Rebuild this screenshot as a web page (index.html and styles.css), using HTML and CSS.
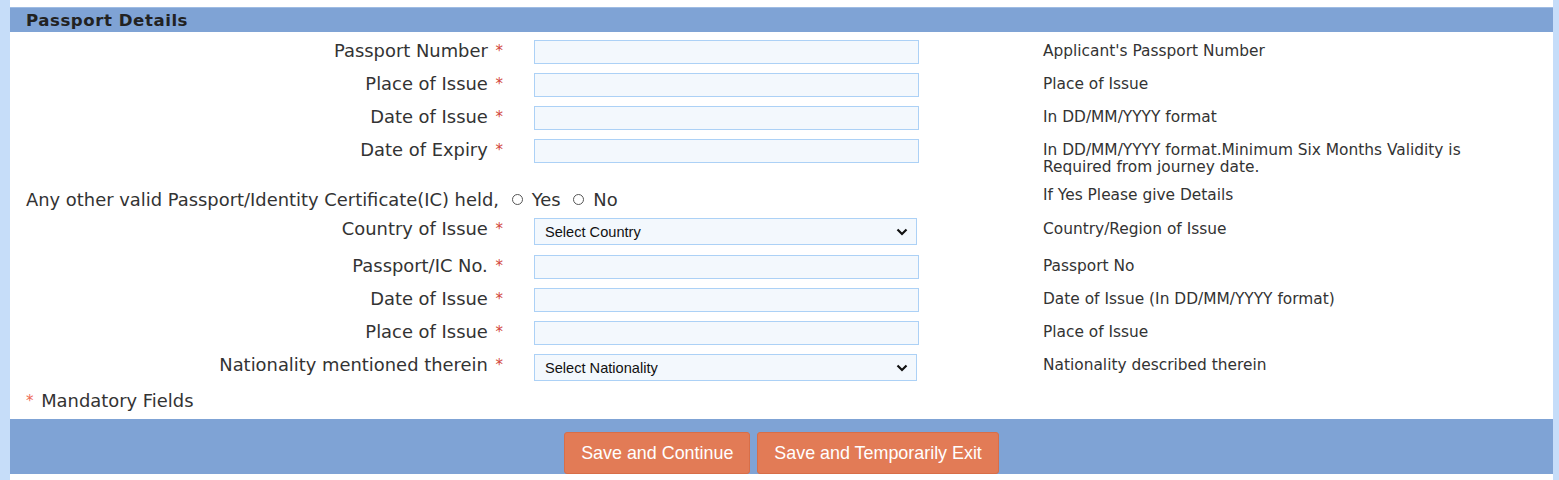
FILE: index.html
```html
<!DOCTYPE html>
<html lang="en">

<head>
    <meta charset="UTF-8">
    <title>Passport Details</title>
    <link rel="stylesheet" href="styles.css">
</head>

<body>
    <div class="page">
        <div class="section-title">Passport Details</div>

        <table class="form-table">
            <tr>
                <td class="label">Passport Number <span class="req">*</span></td>
                <td class="field"><input type="text" class="text-input"></td>
                <td class="help">Applicant's Passport Number</td>
            </tr>
            <tr>
                <td class="label">Place of Issue <span class="req">*</span></td>
                <td class="field"><input type="text" class="text-input"></td>
                <td class="help">Place of Issue</td>
            </tr>
            <tr>
                <td class="label">Date of Issue <span class="req">*</span></td>
                <td class="field"><input type="text" class="text-input"></td>
                <td class="help">In DD/MM/YYYY format</td>
            </tr>
            <tr>
                <td class="label">Date of Expiry <span class="req">*</span></td>
                <td class="field"><input type="text" class="text-input"></td>
                <td class="help help-long"><div class="help-wrap">In DD/MM/YYYY format.Minimum Six Months Validity is Required from journey date.</div></td>
            </tr>
            <tr>
                <td class="question" colspan="2">
                    Any other valid Passport/Identity Certificate(IC) held,
                    <label class="radio"><input type="radio" name="otherPassport" value="Y">Yes</label>
                    <label class="radio"><input type="radio" name="otherPassport" value="N">No</label>
                </td>
                <td class="help">If Yes Please give Details</td>
            </tr>
            <tr class="select-row">
                <td class="label">Country of Issue <span class="req">*</span></td>
                <td class="field">
                    <div class="select-box">
                        <select>
                            <option>Select Country</option>
                        </select>
                        <svg class="chevron" width="12" height="8" viewBox="0 0 12 8">
                            <path d="M1.5 1.5 L6 6 L10.5 1.5" fill="none" stroke="#111" stroke-width="2.2"/>
                        </svg>
                    </div>
                </td>
                <td class="help">Country/Region of Issue</td>
            </tr>
            <tr>
                <td class="label">Passport/IC No. <span class="req">*</span></td>
                <td class="field"><input type="text" class="text-input"></td>
                <td class="help">Passport No</td>
            </tr>
            <tr>
                <td class="label">Date of Issue <span class="req">*</span></td>
                <td class="field"><input type="text" class="text-input"></td>
                <td class="help">Date of Issue (In DD/MM/YYYY format)</td>
            </tr>
            <tr>
                <td class="label">Place of Issue <span class="req">*</span></td>
                <td class="field"><input type="text" class="text-input"></td>
                <td class="help">Place of Issue</td>
            </tr>
            <tr class="select-row">
                <td class="label">Nationality mentioned therein <span class="req">*</span></td>
                <td class="field">
                    <div class="select-box">
                        <select>
                            <option>Select Nationality</option>
                        </select>
                        <svg class="chevron" width="12" height="8" viewBox="0 0 12 8">
                            <path d="M1.5 1.5 L6 6 L10.5 1.5" fill="none" stroke="#111" stroke-width="2.2"/>
                        </svg>
                    </div>
                </td>
                <td class="help">Nationality described therein</td>
            </tr>
        </table>

        <div class="mandatory"><span class="req-note">*</span> Mandatory Fields</div>

        <div class="actions">
            <button class="btn">Save and Continue</button>
            <button class="btn">Save and Temporarily Exit</button>
        </div>
    </div>
</body>

</html>
```

FILE: styles.css
```css
body {
    margin: 0;
    background: #c6ddf9;
    font-family: "DejaVu Sans", Verdana, sans-serif;
    color: #333;
}

.page {
    margin: 0 6px 0 10px;
    height: 480px;
    padding-top: 7px;
    box-sizing: border-box;
    background: #fff;
}

.section-title {
    height: 24px;
    line-height: 25px;
    padding-left: 16px;
    background: #7fa3d5;
    border-top: 1px solid #9fbce3;
    font-size: 16.6px;
    font-weight: bold;
    letter-spacing: 0.55px;
    color: #222;
}

.form-table {
    width: 100%;
    border-collapse: collapse;
    margin-top: 3px;
}

.form-table td {
    padding: 0;
    vertical-align: top;
}

.label {
    width: 493px;
    padding: 6px 31px 7px 0 !important;
    text-align: right;
    white-space: nowrap;
    font-size: 17.9px;
    line-height: 20px;
}

.field {
    width: 509px;
    padding: 5px 0 4px 0 !important;
}

.select-row .field {
    padding-bottom: 5px !important;
}

.help {
    padding: 8px 0 0 0 !important;
    font-size: 15.4px;
    line-height: 17px;
}

.help-long {
    padding-bottom: 3px !important;
}

.help-wrap {
    max-width: 460px;
}

.question {
    padding: 11px 0 3px 16px !important;
    font-size: 17.9px;
    line-height: 20px;
    white-space: nowrap;
}

.req {
    color: #d2463c;
    font-size: 15px;
    line-height: 20px;
    vertical-align: top;
    margin-left: 2px;
}

.text-input {
    display: block;
    width: 385px;
    height: 24px;
    box-sizing: border-box;
    border: 1px solid #acd1f6;
    background: #f3f8fd;
    margin: 0;
    padding: 2px 6px;
}

.select-box {
    position: relative;
    width: 383px;
}

.select-box select {
    display: block;
    width: 383px;
    height: 27px;
    box-sizing: border-box;
    appearance: none;
    -webkit-appearance: none;
    border: 1px solid #acd1f6;
    border-radius: 0;
    background: #f3f8fd;
    padding: 1px 10px 0;
    font-family: "Liberation Sans", Arial, sans-serif;
    font-size: 14.6px;
    color: #111;
}

.chevron {
    position: absolute;
    right: 9px;
    top: 10px;
}

.radio input {
    appearance: none;
    -webkit-appearance: none;
    width: 11px;
    height: 11px;
    margin: 0 9px 0 7px;
    border: 1px solid #555;
    border-radius: 50%;
    vertical-align: 1px;
}

.mandatory {
    padding: 5px 0 8px 16px;
    font-size: 17.9px;
    line-height: 20px;
}

.req-note {
    color: #ee6a55;
    font-size: 15px;
    line-height: 20px;
    vertical-align: top;
    margin-right: 2px;
}

.actions {
    height: 55px;
    box-sizing: border-box;
    padding-top: 13px;
    display: flex;
    justify-content: center;
    gap: 7px;
    background: #7fa3d5;
}

.btn {
    height: 42px;
    padding: 0 16px;
    border: 1px solid #d86e48;
    border-radius: 3px;
    background: #e27b56;
    color: #fff;
    font-family: "Liberation Sans", Arial, sans-serif;
    font-size: 17.9px;
}
```
